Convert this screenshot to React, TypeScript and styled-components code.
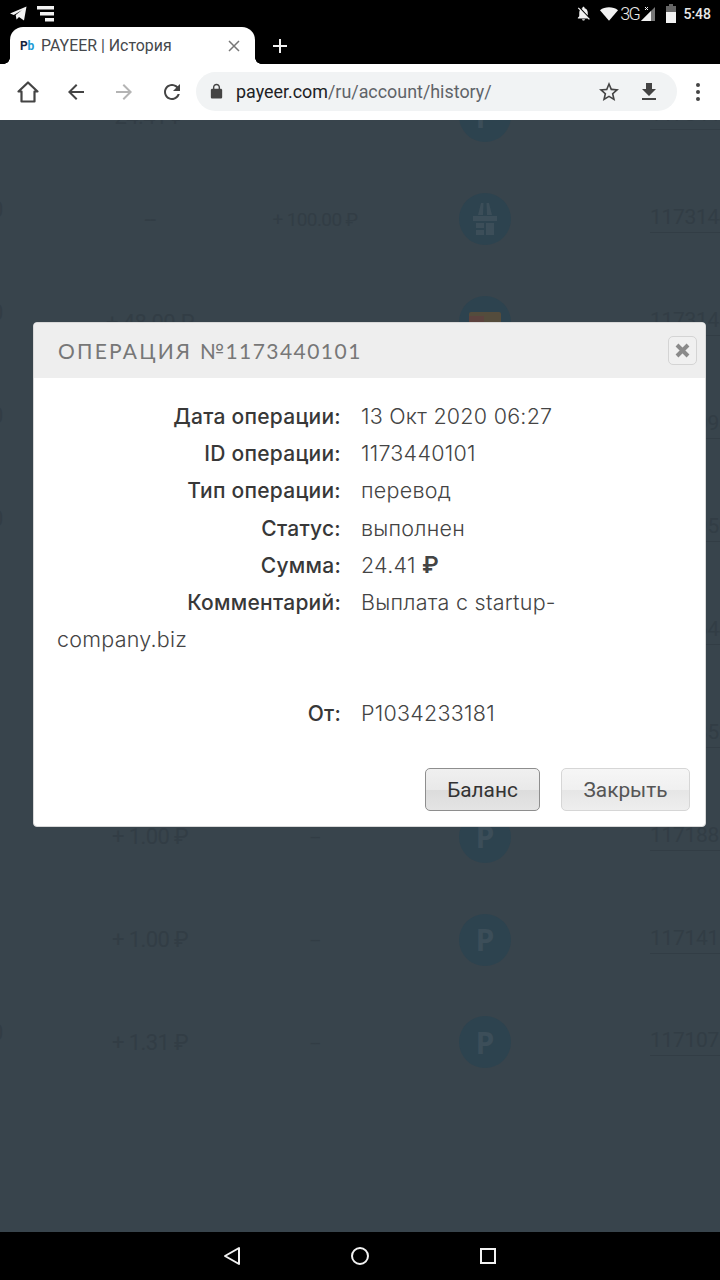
import React from 'react'
import styled, { createGlobalStyle } from 'styled-components'

const GlobalStyle = createGlobalStyle`
  html, body {
    margin: 0;
    padding: 0;
    background: #000;
  }
  * {
    box-sizing: border-box;
  }
`

const Page = styled.div`
  width: 720px;
  height: 1280px;
  display: flex;
  flex-direction: column;
  overflow: hidden;
  font-family: Roboto, "Liberation Sans", sans-serif;
`

const StatusBar = styled.div`
  height: 27px;
  background: #000;
  color: #f2f2f2;
  display: flex;
  align-items: center;
  justify-content: space-between;
  padding: 0 9px 0 10px;
`

const StatusGroup = styled.div`
  display: flex;
  align-items: center;
  gap: ${(p: { $gap: number }) => p.$gap}px;
`

const NetworkLabel = styled.span`
  font-size: 18px;
  letter-spacing: -1.5px;
  font-weight: 300;
  color: #e8e8e8;
`

const Clock = styled.span`
  font-size: 14px;
  font-weight: 500;
  margin-left: 5px;
  color: #e8e8e8;
`

const TabStrip = styled.div`
  height: 37px;
  background: #000;
  display: flex;
  align-items: flex-end;
  padding-left: 10px;
`

const Tab = styled.div`
  position: relative;
  width: 245px;
  height: 37px;
  background: #fff;
  border-radius: 13px 13px 0 0;
  display: flex;
  align-items: center;
  padding: 0 15px 0 10px;
  &::before,
  &::after {
    content: '';
    position: absolute;
    bottom: 0;
    width: 6px;
    height: 6px;
  }
  &::before {
    left: -6px;
    background: radial-gradient(circle at 0 0, #000 5.5px, #fff 6px);
  }
  &::after {
    right: -6px;
    background: radial-gradient(circle at 100% 0, #000 5.5px, #fff 6px);
  }
`

const Favicon = styled.span`
  font-size: 12px;
  font-weight: 700;
  width: 16px;
  color: #13233f;
  letter-spacing: -0.3px;
  & > b {
    color: #1c9ad6;
    font-weight: 700;
  }
`

const TabTitle = styled.span`
  flex: 1;
  margin-left: 5px;
  font-size: 15.9px;
  color: #45484c;
`

const NewTab = styled.div`
  margin-left: 18px;
  height: 37px;
  display: flex;
  align-items: center;
`

const Toolbar = styled.div`
  height: 56px;
  background: #fff;
  display: flex;
  align-items: center;
  padding-left: 15px;
`

const ToolButton = styled.div`
  width: ${(p: { $w: number }) => p.$w}px;
  flex: none;
  display: flex;
  align-items: center;
`

const Omnibox = styled.div`
  width: 481px;
  height: 39px;
  margin: 0 0 1px 0;
  background: #f1f3f4;
  border-radius: 20px;
  display: flex;
  align-items: center;
  padding-left: 12px;
`

const Url = styled.span`
  flex: 1;
  margin-left: 11px;
  font-size: 17.9px;
  color: #5f6368;
  & > b {
    font-weight: 400;
    color: #202124;
  }
`

const OmniAction = styled.div`
  width: 40px;
  display: flex;
  align-items: center;
`

const Content = styled.div`
  position: relative;
  flex: 1;
  overflow: hidden;
  background: #38444c;
`

const HistoryList = styled.div`
  margin-top: -55px;
  display: flex;
  flex-direction: column;
`

const HistoryRow = styled.div`
  height: 102.9px;
  display: grid;
  grid-template-columns: 50px 200px 136px 125px 1fr;
  align-items: center;
  color: #323d45;
  font-size: 22px;
  font-variant-ligatures: none;
`

const EdgeDigit = styled.div`
  margin-left: -9px;
  margin-bottom: 20px;
`

const Amount = styled.div<{ $small?: boolean }>`
  text-align: center;
  white-space: nowrap;
  letter-spacing: -0.6px;
  font-size: ${(p) => (p.$small ? 19 : 22)}px;
  margin-right: ${(p) => (p.$small ? 6 : 0)}px;
`

const Coin = styled.div`
  justify-self: end;
  width: 52px;
  height: 52px;
  border-radius: 50%;
  background: #2d434f;
  color: #3c4e59;
  display: flex;
  align-items: center;
  justify-content: center;
  font-size: 30px;
  font-weight: 700;
  font-family: "Open Sans", sans-serif;
`

const OperationId = styled.div`
  margin-left: 139px;
  padding-bottom: 3px;
  border-bottom: 1px solid #323d45;
  white-space: nowrap;
  font-size: 21px;
  letter-spacing: -0.3px;
  overflow: hidden;
`

const Dialog = styled.div`
  position: absolute;
  left: 33px;
  top: 202px;
  width: 673px;
  height: 505px;
  background: #fff;
  border: 1px solid #d8d8d8;
  border-radius: 4px;
  overflow: hidden;
  display: flex;
  flex-direction: column;
`

const DialogHeader = styled.div`
  height: 55px;
  flex: none;
  background: #eeeeee;
  display: flex;
  align-items: center;
  justify-content: space-between;
  padding: 0 8px 0 24px;
`

const DialogTitle = styled.div`
  font-family: Lato, sans-serif;
  font-size: 21px;
  letter-spacing: 2.2px;
  color: #777;
  & > span {
    letter-spacing: 1.45px;
  }
`

const CloseBox = styled.div`
  width: 29px;
  height: 29px;
  border: 1px solid #d4d4d4;
  border-radius: 5px;
  background: #f0f0f0;
  display: flex;
  align-items: center;
  justify-content: center;
`

const DialogBody = styled.div`
  flex: 1;
  padding: 20px 130px 0 23px;
  font-family: Inter, sans-serif;
  font-size: 21.5px;
  letter-spacing: 0.25px;
  line-height: 37.2px;
  font-weight: 300;
  color: #444;
`

const Field = styled.div`
  margin-bottom: ${(p: { $gap?: number }) => p.$gap ?? 0}px;
`

const FieldLabel = styled.span`
  display: inline-block;
  width: 284px;
  margin-right: 20px;
  text-align: right;
  font-size: 21px;
  color: #383838;
  font-weight: 500;
`

const Rouble = styled.span`
  font-weight: 600;
  font-size: 23px;
`

const DialogFooter = styled.div`
  display: flex;
  justify-content: flex-end;
  gap: 21px;
  padding: 0 15px 15px 0;
`

const DialogButton = styled.div<{ $primary?: boolean }>`
  width: ${(p) => (p.$primary ? 115 : 129)}px;
  height: 43px;
  border-radius: 5px;
  border: 1px solid ${(p) => (p.$primary ? '#8e8e8e' : '#d6d6d6')};
  background: ${(p) =>
    p.$primary
      ? 'linear-gradient(#f0f0f0 0%, #e9e9e9 50%, #dcdcdc 52%, #e4e4e4 100%)'
      : 'linear-gradient(#f6f6f6 0%, #f0f0f0 50%, #e6e6e6 52%, #eeeeee 100%)'};
  color: ${(p) => (p.$primary ? '#333' : '#555')};
  font-size: 20.8px;
  display: flex;
  align-items: center;
  justify-content: center;
`

const NavBar = styled.div`
  height: 48px;
  background: #000;
  display: flex;
  align-items: center;
  justify-content: center;
  gap: 92px;
`

const rows = [
  { edge: '', a: '24.41 ₽', b: '', id: '1173440', icon: 'P' },
  { edge: '0', a: '--', b: '+ 100.00 ₽', id: '1173144', icon: 'shop' },
  { edge: '0', a: '+ 48.00 ₽', b: '', id: '1173143', icon: 'card' },
  { edge: '0', a: '', b: '', id: '1173098', icon: '' },
  { edge: '0', a: '', b: '', id: '1172950', icon: '' },
  { edge: '', a: '', b: '', id: '1172644', icon: '' },
  { edge: '', a: '', b: '', id: '1172352', icon: '' },
  { edge: '', a: '+ 1.00 ₽', b: '--', id: '1171889', icon: 'P' },
  { edge: '', a: '+ 1.00 ₽', b: '--', id: '1171411', icon: 'P' },
  { edge: '0', a: '+ 1.31 ₽', b: '--', id: '1171075', icon: 'P' },
]

function Icon({ d, size = 24, color = '#444' }: { d: string; size?: number; color?: string }) {
  return (
    <svg width={size} height={size} viewBox="0 0 24 24" fill={color}>
      <path d={d} />
    </svg>
  )
}

const ARROW_BACK = 'M20 11H7.83l5.59-5.59L12 4l-8 8 8 8 1.41-1.41L7.83 13H20v-2z'
const ARROW_FORWARD = 'M12 4l-1.41 1.41L16.17 11H4v2h12.17l-5.58 5.59L12 20l8-8z'
const REFRESH =
  'M17.65 6.35C16.2 4.9 14.21 4 12 4c-4.42 0-7.99 3.58-7.99 8s3.57 8 7.99 8c3.73 0 6.84-2.55 7.73-6h-2.08c-.82 2.33-3.04 4-5.65 4-3.31 0-6-2.69-6-6s2.69-6 6-6c1.66 0 3.14.69 4.22 1.78L13 11h7V4l-2.35 2.35z'
const LOCK =
  'M18 8h-1V6c0-2.76-2.24-5-5-5S7 3.24 7 6v2H6c-1.1 0-2 .9-2 2v10c0 1.1.9 2 2 2h12c1.1 0 2-.9 2-2V10c0-1.1-.9-2-2-2zM9 6c0-1.66 1.34-3 3-3s3 1.34 3 3v2H9V6z'
const STAR =
  'M22 9.24l-7.19-.62L12 2 9.19 8.63 2 9.24l5.46 4.73L5.82 21 12 17.27 18.18 21l-1.63-7.03L22 9.24zM12 15.4l-3.76 2.27 1-4.28-3.32-2.88 4.38-.38L12 6.1l1.71 4.04 4.38.38-3.32 2.88 1 4.28L12 15.4z'
const DOWNLOAD = 'M19 9h-4V3H9v6H5l7 7 7-7zM5 18v2h14v-2H5z'
const BELL_OFF =
  'M20 18.69L7.84 6.14 5.27 3.49 4 4.76l2.8 2.8v.01c-.52.99-.8 2.16-.8 3.42v5l-2 2v1h13.73l2 2L21 19.72l-1-1.03zM12 22c1.11 0 2-.89 2-2h-4c0 1.11.89 2 2 2zm6-7.32V11c0-3.08-1.64-5.64-4.5-6.32V4c0-.83-.67-1.5-1.5-1.5s-1.5.67-1.5 1.5v.68c-.15.03-.29.08-.42.12-.1.03-.2.07-.3.11h-.01c-.2.08-.4.17-.59.27-.01 0-.01 0-.02.01L18 14.68z'

function RowIcon({ kind }: { kind: string }) {
  if (kind === 'shop') {
    return (
      <svg width="30" height="36" viewBox="0 0 30 36" fill="#3c4e59">
        <path d="M8 14 11 2h2.5L13 14zM17 14 16.5 2H19l3 12zM3 15h24v5H3zM6 22h8v5H6zM16 22h8v12h-8zM6 29h8v5H6z" />
      </svg>
    )
  }
  if (kind === 'card') {
    return (
      <svg width="36" height="24" viewBox="0 0 36 24">
        <rect x="2" y="2" width="32" height="20" rx="2" fill="#544c3c" />
        <rect x="2" y="6" width="15" height="7" fill="#5c423e" />
      </svg>
    )
  }
  return <>{kind}</>
}

export default function App() {
  return (
    <>
      <GlobalStyle />
      <Page>
        <StatusBar>
          <StatusGroup $gap={10}>
            <svg width="17" height="15" viewBox="0 0 17 15" fill="#f2f2f2">
              <path d="M0 7.5 16.5.5 14 14.5 9 11l-2.5 2.5-.8-4.4L12 4 3.8 8.9z" />
            </svg>
            <svg width="17" height="16" viewBox="0 0 17 16" fill="#f2f2f2">
              <rect x="0" y="0" width="17" height="3.5" />
              <rect x="3" y="6" width="14" height="3.5" />
              <rect x="8" y="12" width="9" height="3.5" />
            </svg>
          </StatusGroup>
          <StatusGroup $gap={2}>
            <Icon d={BELL_OFF} size={17} color="#f2f2f2" />
            <svg width="18" height="14" viewBox="0 0 20 15" fill="#f2f2f2" style={{ marginLeft: 6 }}>
              <path d="M0 3.2C5.5-1 14.5-1 20 3.2L10 15z" />
            </svg>
            <NetworkLabel>3G</NetworkLabel>
            <svg width="14" height="15" viewBox="0 0 14 15">
              <path d="M14 1v14H0z" fill="#777" />
              <path d="M10 5v10H0z" fill="#f2f2f2" />
              <path d="M4 1l3 3M7 1 4 4" stroke="#f2f2f2" strokeWidth="1" />
            </svg>
            <svg width="10" height="19" viewBox="0 0 10 19" style={{ marginLeft: 9 }}>
              <rect x="0" y="2" width="10" height="17" fill="#f2f2f2" />
              <rect x="0" y="2" width="10" height="6" fill="#666" />
              <rect x="3" y="0" width="4" height="2" fill="#666" />
            </svg>
            <Clock>5:48</Clock>
          </StatusGroup>
        </StatusBar>

        <TabStrip>
          <Tab>
            <Favicon>
              P<b>b</b>
            </Favicon>
            <TabTitle>PAYEER | История</TabTitle>
            <svg width="12" height="12" viewBox="0 0 12 12" stroke="#777" strokeWidth="1.5">
              <path d="M1 1l10 10M11 1 1 11" />
            </svg>
          </Tab>
          <NewTab>
            <svg width="14" height="14" viewBox="0 0 14 14" stroke="#f2f2f2" strokeWidth="2">
              <path d="M7 0v14M0 7h14" />
            </svg>
          </NewTab>
        </TabStrip>

        <Toolbar>
          <ToolButton $w={49}>
            <svg width="26" height="26" viewBox="0 0 26 26" fill="none" stroke="#444" strokeWidth="2.2" strokeLinejoin="round">
              <path d="M13 3.5 3.5 12.5 6.5 12.5V22.5H19.5V12.5H22.5Z" />
            </svg>
          </ToolButton>
          <ToolButton $w={48}>
            <Icon d={ARROW_BACK} size={24} />
          </ToolButton>
          <ToolButton $w={48}>
            <Icon d={ARROW_FORWARD} size={24} color="#b4b4b4" />
          </ToolButton>
          <ToolButton $w={36}>
            <Icon d={REFRESH} size={24} />
          </ToolButton>
          <Omnibox>
            <Icon d={LOCK} size={17} color="#444" />
            <Url>
              <b>payeer.com</b>/ru/account/history/
            </Url>
            <OmniAction>
              <Icon d={STAR} size={24} />
            </OmniAction>
            <OmniAction>
              <Icon d={DOWNLOAD} size={24} />
            </OmniAction>
          </Omnibox>
          <ToolButton $w={43}>
            <svg width="43" height="24" viewBox="0 0 43 24" fill="#444">
              <circle cx="21" cy="5" r="2" />
              <circle cx="21" cy="12" r="2" />
              <circle cx="21" cy="19" r="2" />
            </svg>
          </ToolButton>
        </Toolbar>

        <Content>
          <HistoryList>
            {rows.map((row, i) => (
              <HistoryRow key={i}>
                <EdgeDigit>{row.edge}</EdgeDigit>
                <Amount>{row.a}</Amount>
                <Amount $small>{row.b}</Amount>
                <Coin>
                  <RowIcon kind={row.icon} />
                </Coin>
                <OperationId>{row.id}</OperationId>
              </HistoryRow>
            ))}
          </HistoryList>

          <Dialog>
            <DialogHeader>
              <DialogTitle>
                ОПЕРАЦИЯ <span>№1173440101</span>
              </DialogTitle>
              <CloseBox>
                <svg width="15" height="15" viewBox="0 0 15 15" stroke="#8a8a8a" strokeWidth="4">
                  <path d="M2 2l11 11M13 2 2 13" />
                </svg>
              </CloseBox>
            </DialogHeader>
            <DialogBody>
              <Field>
                <FieldLabel>Дата операции:</FieldLabel>13 Окт 2020 06:27
              </Field>
              <Field>
                <FieldLabel>ID операции:</FieldLabel>1173440101
              </Field>
              <Field>
                <FieldLabel>Тип операции:</FieldLabel>перевод
              </Field>
              <Field>
                <FieldLabel>Статус:</FieldLabel>выполнен
              </Field>
              <Field>
                <FieldLabel>Сумма:</FieldLabel>24.41 <Rouble>₽</Rouble>
              </Field>
              <Field $gap={37}>
                <FieldLabel>Комментарий:</FieldLabel>Выплата с startup-company.biz
              </Field>
              <Field>
                <FieldLabel>От:</FieldLabel>P1034233181
              </Field>
            </DialogBody>
            <DialogFooter>
              <DialogButton $primary>Баланс</DialogButton>
              <DialogButton>Закрыть</DialogButton>
            </DialogFooter>
          </Dialog>
        </Content>

        <NavBar>
          <svg width="36" height="24" viewBox="0 0 36 24" fill="none" stroke="#f2f2f2" strokeWidth="2" strokeLinejoin="round">
            <path d="M25 4V20L11 12Z" />
          </svg>
          <svg width="36" height="24" viewBox="0 0 36 24" fill="none" stroke="#f2f2f2" strokeWidth="2">
            <circle cx="18" cy="12" r="8" />
          </svg>
          <svg width="36" height="24" viewBox="0 0 36 24" fill="none" stroke="#f2f2f2" strokeWidth="2">
            <rect x="11" y="5" width="14" height="14" />
          </svg>
        </NavBar>
      </Page>
    </>
  )
}
